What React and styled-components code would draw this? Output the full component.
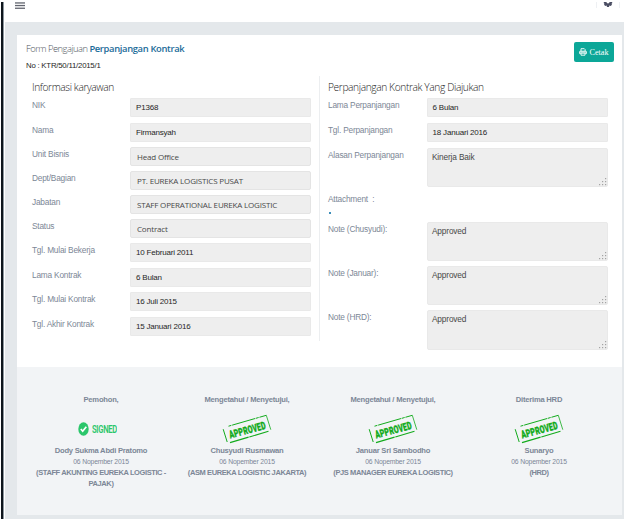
import React from "react";
import styled, { createGlobalStyle, css } from "styled-components";

const Global = createGlobalStyle`
  * { box-sizing: border-box; }
  html, body { margin: 0; background: #fff; overflow: hidden; }
  body { font-family: "Liberation Sans", Arial, sans-serif; font-size: 8.3px; color: #7c8796; }
`;

const Page = styled.div`
  width: 625px;
  height: 519px;
  display: grid;
  grid-template-columns: 5px 619px 1px;
  background: #fff;
`;
const Rail = styled.div`
  margin: 2px 1px 0 1px;
  background: #0e151c;
  border-right: 1px solid #8d979e;
`;
const Main = styled.div`
  display: flex;
  flex-direction: column;
  min-width: 0;
  background: #e4e8eb;
`;
const TopBar = styled.header`
  height: 22px;
  flex: none;
  display: flex;
  align-items: flex-start;
  justify-content: space-between;
  background: #fff;
`;
const MenuIcon = styled.svg`
  width: 10px;
  height: 8px;
  margin: 2px 0 0 10px;
`;
const Settings = styled.div`
  display: flex;
  justify-content: center;
  width: 24px;
  height: 6px;
  margin: 2px 4px 0 0;
  border: solid #eef0f3;
  border-width: 0 1px;
`;
const Card = styled.section`
  width: 605px;
  height: 480px;
  margin: 13px 0 0 12px;
  display: flex;
  flex-direction: column;
  background: #fff;
`;
const CardHead = styled.div`
  height: 41px;
  display: flex;
  justify-content: space-between;
  padding: 7px 8px 0 9px;
`;
const Title = styled.h1`
  margin: 0;
  font: 300 9.4px/13px "Open Sans", sans-serif;
  letter-spacing: -0.52px;
  color: #4f565d;
  b { color: #1b6c99; font-weight: 600; letter-spacing: -0.34px; }
`;
const Number = styled.div`
  margin-top: 6px;
  font-size: 7.8px;
  line-height: 10px;
  letter-spacing: -0.22px;
  color: #262626;
`;
const PrintButton = styled.button`
  display: flex;
  align-items: center;
  justify-content: center;
  gap: 2px;
  width: 40px;
  height: 20px;
  padding: 0;
  border: 0;
  border-radius: 2px;
  background: #0ca798;
  color: #fff;
  font: 8.2px "Liberation Serif", serif;
`;
const Columns = styled.div`
  height: 291px;
  display: grid;
  grid-template-columns: 303px 302px;
`;
const Column = styled.div`
  height: 265px;
  padding-left: ${(p) => (p.$first ? 15 : 8)}px;
  --label: ${(p) => (p.$first ? 98 : 98.6)}px;
  ${(p) => p.$first && css`border-right: 1px solid #eceef0;`}
`;
const Heading = styled.h2`
  margin: 0;
  height: 22px;
  padding-top: 4px;
  font: 300 10.2px/14px "Open Sans", sans-serif;
  letter-spacing: -0.38px;
  color: #222;
`;
const Row = styled.div`
  height: ${(p) => p.$h}px;
  display: grid;
  grid-template-columns: var(--label) 181px;
  align-items: start;
`;
const Label = styled.label`
  padding-top: 2px;
  line-height: 10px;
  white-space: nowrap;
  letter-spacing: -0.2px;
`;
const Field = styled.div`
  position: relative;
  height: ${(p) => (p.$area ? 39.3 : 19)}px;
  padding-left: 5px;
  border: 1px solid #e9e9e9;
  border-radius: 1px;
  background: #eee;
  color: #262626;
  font-size: 8px;
  line-height: 18px;
  white-space: nowrap;
  letter-spacing: -0.2px;
  ${(p) => p.$soft && css`
    padding-left: 6px;
    border-color: #e4e4e4;
    border-radius: 2px;
    color: #484848;
    font: 8px/17px "Open Sans", sans-serif;
    letter-spacing: -0.18px;
  `}
  ${(p) => p.$area && css`
    padding-left: 4.4px;
    border-radius: 2px;
    color: #484848;
    font-size: 8.3px;
    line-height: 17px;
    letter-spacing: -0.15px;
  `}
`;
const Grip = styled.svg`
  position: absolute;
  right: 0;
  bottom: 0;
  width: 9px;
  height: 8px;
`;
const Attachment = styled.div`
  height: 29.5px;
  padding-top: 2px;
  line-height: 10px;
  letter-spacing: -0.2px;
`;
const Bullet = styled.div`
  width: 2px;
  height: 2px;
  margin: 8px 0 0 1px;
  background: #3d8eb9;
`;
const Footer = styled.footer`
  flex: 1;
  display: grid;
  grid-template-columns: 11px 146px 146px 146px 146px;
  padding-top: 27px;
  background: #f2f4f6;
  &::before { content: ""; }
`;
const Signer = styled.div`
  display: flex;
  flex-direction: column;
  align-items: center;
  text-align: center;
  font-weight: bold;
  font-size: 7.6px;
  line-height: 11px;
  letter-spacing: -0.22px;
  white-space: nowrap;
  color: #7c8796;
`;
const Mark = styled.div`
  height: 40px;
  display: flex;
  align-items: center;
  padding-top: 8px;
`;
const Signed = styled.div`
  display: flex;
  align-items: center;
  gap: 3px;
  margin-right: 7px;
`;
const When = styled.div`
  font-size: 6.8px;
  font-weight: normal;
  line-height: 12px;
  letter-spacing: -0.16px;
`;
const JobTitle = styled.div`
  width: 134px;
  white-space: normal;
  font-size: 7.5px;
  line-height: 10.6px;
  letter-spacing: -0.4px;
`;

const personal = [
  ["NIK", "P1368", 25],
  ["Nama", "Firmansyah", 24],
  ["Unit Bisnis", "Head Office", 24, true],
  ["Dept/Bagian", "PT. EUREKA LOGISTICS PUSAT", 24, true],
  ["Jabatan", "STAFF OPERATIONAL EUREKA LOGISTIC", 24, true],
  ["Status", "Contract", 24.4, true],
  ["Tgl. Mulai Bekerja", "10 Februari 2011", 24.5],
  ["Lama Kontrak", "6 Bulan", 24.5],
  ["Tgl. Mulai Kontrak", "16 Juli 2015", 24.5],
  ["Tgl. Akhir Kontrak", "15 Januari 2016", 20],
];
const notes = [
  ["Note (Chusyudi):", 44.4],
  ["Note (Januar):", 44.6],
  ["Note (HRD):", 40],
];
const signers = [
  { role: "Pemohon,", name: "Dody Sukma Abdi Pratomo", title: "(STAFF AKUNTING EUREKA LOGISTIC - PAJAK)", signed: true },
  { role: "Mengetahui / Menyetujui,", name: "Chusyudi Rusmawan", title: "(ASM EUREKA LOGISTIC JAKARTA)" },
  { role: "Mengetahui / Menyetujui,", name: "Januar Sri Sambodho", title: "(PJS MANAGER EUREKA LOGISTIC)" },
  { role: "Diterima HRD", name: "Sunaryo", title: "(HRD)" },
];

const TextArea = ({ children }) => (
  <Field $area>
    {children}
    <Grip viewBox="0 0 9 8" fill="#a3a3a3">
      {[[7, 0], [4, 3], [7, 3], [1, 6], [4, 6], [7, 6]].map(([x, y]) => (
        <rect key={`${x}-${y}`} x={x} y={y} width="1.2" height="1.2" />
      ))}
    </Grip>
  </Field>
);

const Gear = () => (
  <svg width="10" height="6" viewBox="0 0 10 6">
    <path d="M.8 0H3.4Q3.6 1.4 5 1.5Q6.4 1.4 6.6 0H9.2V1.2L8.6 1.6L8.9 2.8L7.8 3.9L6.4 3.5L6 5H4L3.6 3.5L2.2 3.9L1.1 2.8L1.4 1.6L.8 1.2Z" fill="#4b4e63" />
  </svg>
);

const Printer = () => (
  <svg width="8" height="8" viewBox="0 0 8 8" fill="none" stroke="#fff" strokeWidth=".9">
    <path d="M2 3.2V.7H5.3L6.1 1.5V3.2M2 5.2H6V7.2H2Z" />
    <path d="M1.8 5.6H.6V3.8Q.6 3.2 1.2 3.2H6.8Q7.4 3.2 7.4 3.8V5.6H6.2" />
    <path d="M.8 4.1H7.2" />
  </svg>
);

const SignedMark = () => (
  <Signed>
    <svg width="11" height="14" viewBox="0 0 11 14">
      <ellipse cx="5.5" cy="7" rx="5.2" ry="6.8" fill="#2bc66b" />
      <path d="M2.8 7L4.7 9.2L8.3 4.7" fill="none" stroke="#fff" strokeWidth="1.7" />
    </svg>
    <svg width="25" height="14" viewBox="0 0 25 14">
      <text x="0" y="10.9" transform="scale(.75 1)" fontFamily="Roboto, sans-serif" fontWeight="600" fontSize="10.2" letterSpacing="-.4" fill="#2bc66b">SIGNED</text>
    </svg>
  </Signed>
);

const ApprovedStamp = () => (
  <svg width="50" height="30" viewBox="0 0 50 30">
    <g fill="none" stroke="#12ab1c">
      <path d="M6.5 12.2L44.3 1.3" strokeWidth="1" strokeDasharray="3 .8 24 .6" />
      <path d="M44.3 1.3L48.8 15.7" strokeWidth=".8" />
      <path d="M46.5 17.3L8 28.6" strokeWidth="1.1" strokeDasharray="20 .7" />
      <path d="M1.2 15.2L5.2 28" strokeWidth="1" />
    </g>
    <text transform="translate(8.3 24.6) rotate(-15.5) scale(.66 1)" fontFamily="Roboto, sans-serif" fontWeight="900" fontSize="10.6" letterSpacing=".25" fill="#12ab1c" stroke="#12ab1c" strokeWidth=".35">APPROVED</text>
  </svg>
);

export default function App() {
  return (
    <Page>
      <Global />
      <Rail />
      <Main>
        <TopBar>
          <MenuIcon viewBox="0 0 10 8" fill="#62656f">
            <rect width="10" height="1.3" y=".3" />
            <rect width="10" height="1.3" y="2.9" />
            <rect width="10" height="1.3" y="5.6" />
          </MenuIcon>
          <Settings><Gear /></Settings>
        </TopBar>
        <Card>
          <CardHead>
            <div>
              <Title>Form Pengajuan <b>Perpanjangan Kontrak</b></Title>
              <Number>No : KTR/50/11/2015/1</Number>
            </div>
            <PrintButton><Printer />Cetak</PrintButton>
          </CardHead>
          <Columns>
            <Column $first>
              <Heading>Informasi karyawan</Heading>
              {personal.map(([label, value, h, soft]) => (
                <Row key={label} $h={h}>
                  <Label>{label}</Label>
                  <Field $soft={soft}>{value}</Field>
                </Row>
              ))}
            </Column>
            <Column>
              <Heading>Perpanjangan Kontrak Yang Diajukan</Heading>
              <Row $h={25}><Label>Lama Perpanjangan</Label><Field>6 Bulan</Field></Row>
              <Row $h={24.5}><Label>Tgl. Perpanjangan</Label><Field>18 Januari 2016</Field></Row>
              <Row $h={44.5}><Label>Alasan Perpanjangan</Label><TextArea>Kinerja Baik</TextArea></Row>
              <Attachment>Attachment&nbsp; :<Bullet /></Attachment>
              {notes.map(([label, h]) => (
                <Row key={label} $h={h}><Label>{label}</Label><TextArea>Approved</TextArea></Row>
              ))}
            </Column>
          </Columns>
          <Footer>
            {signers.map((s) => (
              <Signer key={s.name}>
                <div>{s.role}</div>
                <Mark>{s.signed ? <SignedMark /> : <ApprovedStamp />}</Mark>
                <div>{s.name}</div>
                <When>06 Nopember 2015</When>
                <JobTitle>{s.title}</JobTitle>
              </Signer>
            ))}
          </Footer>
        </Card>
      </Main>
    </Page>
  );
}
